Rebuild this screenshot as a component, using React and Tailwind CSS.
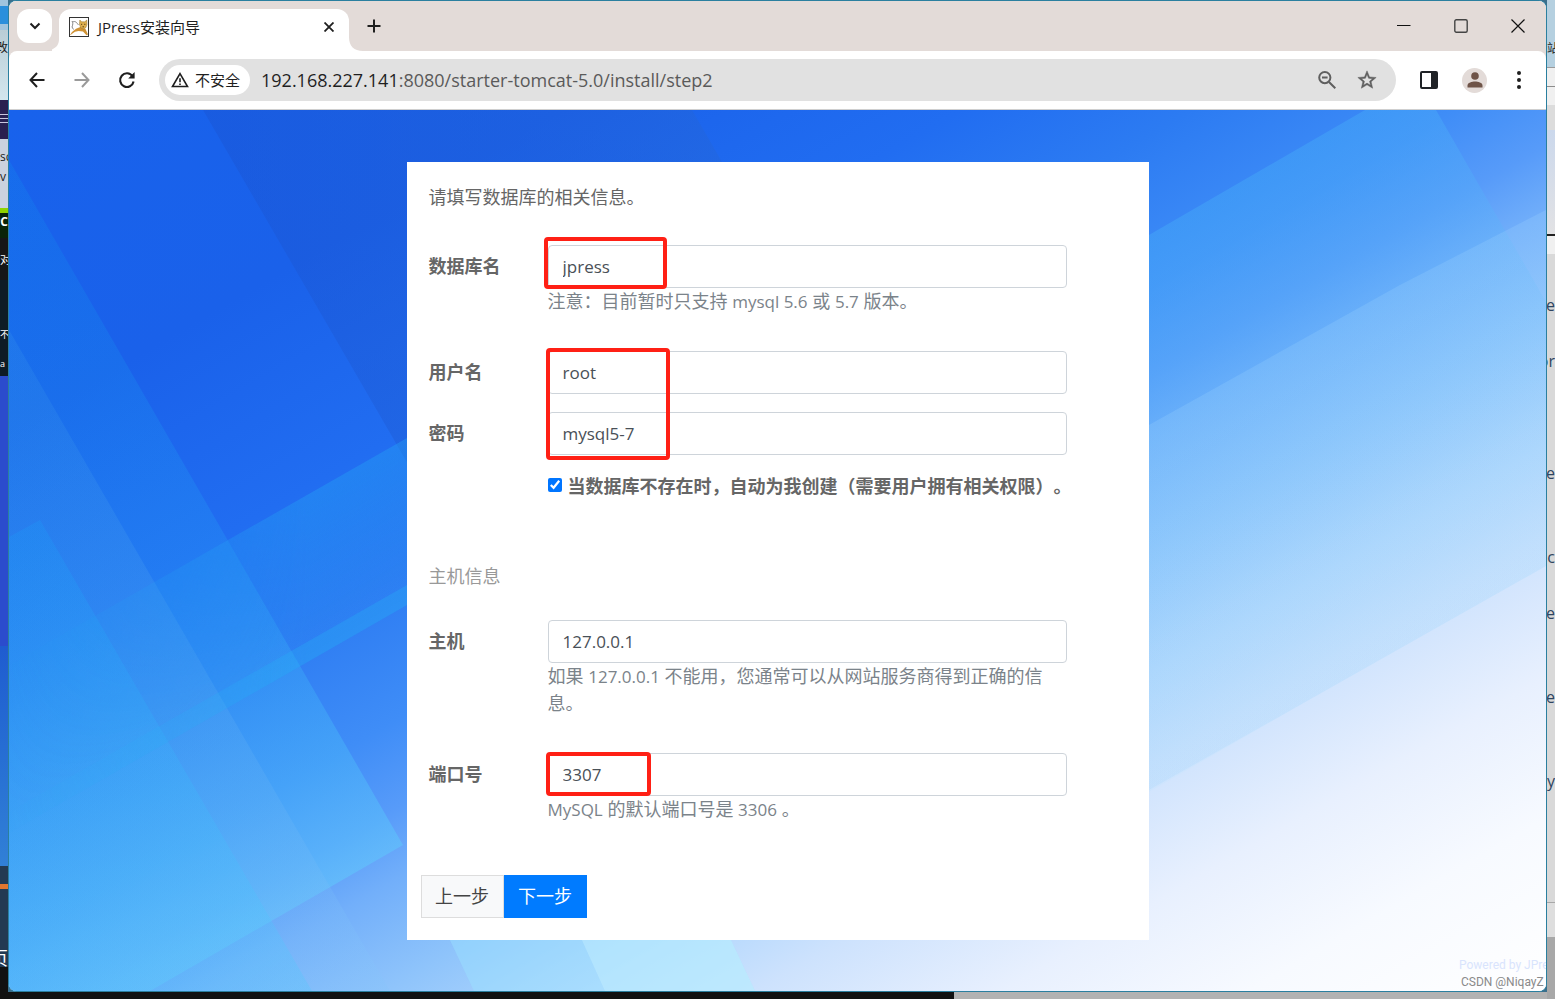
import React from "react";

const LEFT_NOTES = "text-[11px] leading-none text-white whitespace-nowrap";

const EDITOR_LINES = ["ne", "", "or", "", "", "", "te", "", "", ".c", "", "re", "", "", "ne", "", "", "ny"];

function LeftDesktop() {
  return (
    <aside aria-hidden="true" className="row-span-2 flex w-2 flex-col overflow-hidden bg-[#111111]">
      <div className="flex h-[30px] flex-col justify-center bg-[#9fc4de]">
        <div className="h-[18px] bg-[#2a8fdc]" />
      </div>
      <div className="flex h-[70px] flex-col items-end bg-gradient-to-b from-[#b9cdd6] to-[#d3e6ee] pt-3">
        <span className="text-[12px] leading-none text-[#222222]">改</span>
      </div>
      <div className="flex h-[39px] flex-col gap-[3px] bg-[#2a2050] pt-[14px]">
        <div className="h-px bg-[#c9c4dd]" />
        <div className="h-px bg-[#c9c4dd]" />
        <div className="h-px bg-[#c9c4dd]" />
      </div>
      <div className="flex h-[69px] flex-col gap-2 bg-[#cbd2de] pt-3">
        <span className="text-[12px] leading-none text-[#222222]">sc</span>
        <span className="text-[12px] leading-none text-[#222222]">v</span>
      </div>
      <div className="h-[5px] bg-[#8fd400]" />
      <div className="flex h-[25px] items-start justify-end bg-[#0a2408] pt-[3px]">
        <span className="text-[12px] font-bold leading-none text-white">PC</span>
      </div>
      <div className="flex h-[42px] items-center justify-start bg-[#161616]">
        <span className={LEFT_NOTES}>对</span>
      </div>
      <div className="flex h-24 flex-col items-start justify-end gap-5 bg-[#0e1c26] pb-2">
        <span className="text-[9px] leading-none text-white">不</span>
        <span className="text-[9px] leading-none text-white">a</span>
      </div>
      <div className="h-[270px] bg-[#2b4ccd]" />
      <div className="h-[220px] bg-gradient-to-b from-[#1f5cd0] to-[#3180d6]" />
      <div className="h-[18px] bg-[#233a52]" />
      <div className="h-[5px] bg-[#e0762e]" />
      <div className="flex h-[78px] items-end justify-end bg-[#233a52]">
        <span className="text-[18px] leading-none text-white">页</span>
      </div>
    </aside>
  );
}

function RightDesktop() {
  return (
    <aside aria-hidden="true" className="row-span-2 flex w-2 flex-col overflow-hidden bg-[#a8a8a8]">
      <div className="flex h-[67px] items-end bg-[#b5d0e0] pb-3">
        <span className="text-[12px] leading-none text-[#222222]">站</span>
      </div>
      <div className="flex h-[38px] flex-col justify-center border-t border-[#9a9a9a] bg-[#f0f0f0]">
        <div className="h-px bg-[#8c8c8c]" />
      </div>
      <div className="h-[25px] bg-[#dcdcdc]" />
      <div className="h-[106px] border-b-2 border-[#222222] bg-gradient-to-b from-[#cbd8ec] to-[#e2e2e4]" />
      <div className="h-[18px] bg-[#f0f0f0]" />
      <div className="flex h-[648px] flex-col bg-[#d9d9d9] pt-[37px]">
        {EDITOR_LINES.map((line, i) => (
          <div key={i} className="flex h-7 items-center justify-end text-[16px] leading-none text-[#2f4560]">
            {line}
          </div>
        ))}
      </div>
      <div className="h-9 border-y border-[#a8a8a8] bg-[#dedede]" />
    </aside>
  );
}

function Favicon() {
  return (
    <svg width="20" height="20" viewBox="0 0 20 20" className="shrink-0">
      <rect x="0.5" y="0.5" width="19" height="19" fill="#fff" stroke="#333" />
      <path d="M3 4c1.200 1.800 1 3.500 0 6M3.500 5c3-1.500 4.500 1 6 3M3 10l1.500 2.500" fill="none" stroke="#777" strokeWidth="0.9" />
      <path d="M1 18l2-3 4-3.200 5-2 4.500 2.200 2.500 5.500-1.500.8-3.500-3.800-4.500-.6-3.500.9-2.500 1.700-2 1.500z" fill="#cf9235" />
      <path d="M10.800 3l1.800 1.800h3.200L17.800 3l.2 4.500-1.200 3.200-2.600 1.400-2.500-1.400-1.200-3.200z" fill="#dfb050" stroke="#93702c" strokeWidth="0.5" />
      <path d="M12 7.300h1.200M15.200 7.300h1.200M13.500 9.800h1.500" stroke="#4a3510" strokeWidth="0.9" />
    </svg>
  );
}

function TabStrip() {
  return (
    <div className="flex h-[50px] items-end bg-[#e3dbd8] pl-2">
      <button type="button" aria-label="Search tabs" className="mb-2 flex h-[34px] w-[35px] items-center justify-center rounded-xl bg-white">
        <svg width="12" height="8" viewBox="0 0 12 8" fill="none" stroke="#1f1f1f" strokeWidth="2">
          <path d="M1.500 1.500L6 6l4.500-4.500" />
        </svg>
      </button>
      <svg width="7" height="42" viewBox="0 0 7 42" fill="#fff">
        <path d="M7 42V30C7 36 4 40 -5 42z" />
      </svg>
      <div className="flex h-[42px] w-[290px] items-center rounded-t-xl bg-white pb-[6px] pl-[10px] pr-3">
        <Favicon />
        <span className="ml-[9px] flex-1 text-[15px] leading-5 text-[#1f1f1f]">JPress安装向导</span>
        <button type="button" aria-label="Close tab" className="flex size-4 items-center justify-center">
          <svg width="10" height="10" viewBox="0 0 10 10" stroke="#1f1f1f" strokeWidth="1.800">
            <path d="M0.500 0.500l9 9M9.500 0.500l-9 9" />
          </svg>
        </button>
      </div>
      <svg width="14" height="14" viewBox="0 0 14 14" fill="#fff">
        <path d="M0 14V0C0 9 5 14 14 14z" />
      </svg>
      <button type="button" aria-label="New tab" className="mb-4 ml-[2px] flex size-[18px] items-center justify-center">
        <svg width="14" height="14" viewBox="0 0 14 14" stroke="#1f1f1f" strokeWidth="2">
          <path d="M7 0.500v13M0.500 7h13" />
        </svg>
      </button>
      <div className="flex-1" />
      <div className="mb-[17px] flex items-center gap-[41px] pr-5">
        <button type="button" aria-label="Minimize" className="flex size-4 items-center justify-center">
          <svg width="14" height="2" viewBox="0 0 14 2"><path d="M0 .5h13.500" stroke="#111" strokeWidth="1" /></svg>
        </button>
        <button type="button" aria-label="Maximize" className="flex size-4 items-center justify-center">
          <svg width="14" height="14" viewBox="0 0 14 14" fill="none" stroke="#444" strokeWidth="1.400">
            <rect x="0.800" y="0.800" width="12.400" height="12.400" rx="1.500" />
          </svg>
        </button>
        <button type="button" aria-label="Close window" className="flex size-4 items-center justify-center">
          <svg width="14" height="14" viewBox="0 0 14 14" stroke="#111" strokeWidth="1.200">
            <path d="M0.500 0.500l13 13M13.500 0.500l-13 13" />
          </svg>
        </button>
      </div>
    </div>
  );
}

function Toolbar() {
  return (
    <div className="bg-[#e3dbd8]">
      <div className="flex h-[59px] items-center rounded-t-lg border-b border-[#cfcfcf] bg-white pl-[18px] pr-[18px]">
        <div className="flex items-center gap-[25px]">
          <button type="button" aria-label="Back" className="flex size-5 items-center justify-center">
            <svg width="16" height="16" viewBox="0 0 16 16" fill="none" stroke="#1f1f1f" strokeWidth="2">
              <path d="M8 1L1.500 8 8 15M1.500 8H15.500" />
            </svg>
          </button>
          <button type="button" aria-label="Forward" className="flex size-5 items-center justify-center">
            <svg width="16" height="16" viewBox="0 0 16 16" fill="none" stroke="#9a9a9a" strokeWidth="2">
              <path d="M8 1l6.500 7L8 15M14.500 8H0.500" />
            </svg>
          </button>
          <button type="button" aria-label="Reload" className="flex size-5 items-center justify-center">
            <svg width="18" height="18" viewBox="0 0 18 18">
              <path d="M14.500 5.200A6.800 6.800 0 1 0 15.600 10.500" fill="none" stroke="#1f1f1f" strokeWidth="2.100" />
              <path d="M16.600 1v6.500H10.200z" fill="#1f1f1f" />
            </svg>
          </button>
        </div>
        <div className="ml-[22px] flex h-[42px] min-w-0 flex-1 items-center rounded-full bg-[#e1e1e1] pl-[6px] pr-[19px]">
          <button type="button" className="flex h-[30px] shrink-0 items-center gap-[6px] rounded-full bg-white pl-[6px] pr-[10px]">
            <svg width="18" height="16" viewBox="0 0 18 16" fill="none" stroke="#1f1f1f">
              <path d="M9 1.700L16.500 14.500h-15z" strokeWidth="1.600" />
              <path d="M9 6.200v4M9 11.500v1.500" strokeWidth="1.600" />
            </svg>
            <span className="text-[15px] leading-5 text-[#1f1f1f]">不安全</span>
          </button>
          <a href="#step2" className="ml-[11px] min-w-0 flex-1 truncate text-[18px] leading-6 text-[#5a5a5a]">
            <span className="text-[#1f1f1f]">192.168.227.141</span>:8080/starter-tomcat-5.0/install/step2
          </a>
          <button type="button" aria-label="Zoom" className="flex size-5 items-center justify-center">
            <svg width="18" height="18" viewBox="0 0 18 18" fill="none" stroke="#5f5f5f" strokeWidth="2">
              <circle cx="6.800" cy="6.600" r="5.600" />
              <path d="M11 11l6.300 6.300M4 6.600h5.600" />
            </svg>
          </button>
          <button type="button" aria-label="Bookmark" className="ml-5 flex size-5 items-center justify-center">
            <svg width="22" height="22" viewBox="0 0 24 24" fill="#5f5f5f" className="shrink-0">
              <path d="M22 9.240l-7.190-.62L12 2 9.190 8.630 2 9.240l5.460 4.730L5.820 21 12 17.270 18.180 21l-1.630-7.030L22 9.240zM12 15.400l-3.760 2.270 1-4.280-3.320-2.880 4.380-.38L12 6.100l1.710 4.040 4.380.38-3.320 2.880 1 4.280L12 15.400z" stroke="#5f5f5f" strokeWidth="0.500" />
            </svg>
          </button>
        </div>
        <button type="button" aria-label="Side panel" className="ml-6 flex size-[18px] items-center justify-center">
          <svg width="18" height="18" viewBox="0 0 18 18">
            <rect x="1" y="1" width="16" height="16" rx="1" fill="#fff" stroke="#1f2226" strokeWidth="2" />
            <path d="M11 1h6v16h-6z" fill="#1f2226" />
          </svg>
        </button>
        <button type="button" aria-label="Profile" className="ml-6 flex size-[25px] items-center justify-center rounded-full bg-[#e3dbd8]">
          <svg width="16" height="16" viewBox="0 0 16 16" fill="#6f5448">
            <circle cx="8" cy="4" r="3.800" />
            <path d="M.5 15.500v-2C.5 10.500 5 9.500 8 9.500s7.500 1 7.500 4v2z" />
          </svg>
        </button>
        <button type="button" aria-label="Menu" className="ml-[23px] flex h-5 w-[18px] items-center justify-center">
          <svg width="4" height="18" viewBox="0 0 4 18" fill="#1f1f1f">
            <circle cx="2" cy="2" r="2" />
            <circle cx="2" cy="9" r="2" />
            <circle cx="2" cy="16" r="2" />
          </svg>
        </button>
      </div>
    </div>
  );
}

function Backdrop() {
  return (
    <svg
      aria-hidden="true"
      className="absolute inset-0 size-full"
      viewBox="9 110 1537 881"
      preserveAspectRatio="none"
    >
      <defs>
        <linearGradient id="sky" gradientUnits="userSpaceOnUse" x1="9" y1="110" x2="776" y2="1440">
          <stop offset="0" stopColor="#1862ec" />
          <stop offset="0.18" stopColor="#1a61ea" />
          <stop offset="0.31" stopColor="#216df1" />
          <stop offset="0.385" stopColor="#2c7bf2" />
          <stop offset="0.47" stopColor="#3f8df7" />
          <stop offset="0.52" stopColor="#579bf9" />
          <stop offset="0.56" stopColor="#72affa" />
          <stop offset="0.62" stopColor="#8fc4fb" />
          <stop offset="0.69" stopColor="#b4d8fd" />
          <stop offset="0.74" stopColor="#cde2fd" />
          <stop offset="0.82" stopColor="#e8f0fe" />
          <stop offset="0.9" stopColor="#f7faff" />
          <stop offset="1" stopColor="#ffffff" />
        </linearGradient>
        <linearGradient id="shade" x1="0" y1="0" x2="1" y2="0">
          <stop offset="0" stopColor="#1a50cc" stopOpacity="0.35" />
          <stop offset="1" stopColor="#2a70dc" stopOpacity="0.45" />
        </linearGradient>
        <linearGradient id="beam" gradientUnits="userSpaceOnUse" x1="60" y1="250" x2="330" y2="890">
          <stop offset="0" stopColor="#10a0f0" stopOpacity="0.17" />
          <stop offset="0.5" stopColor="#28a4f6" stopOpacity="0.26" />
          <stop offset="1" stopColor="#60ccfc" stopOpacity="0.5" />
        </linearGradient>
        <linearGradient id="beamSoft" gradientUnits="userSpaceOnUse" x1="40" y1="400" x2="330" y2="991">
          <stop offset="0" stopColor="#3a98ea" stopOpacity="0.22" />
          <stop offset="1" stopColor="#84c4fa" stopOpacity="0.25" />
        </linearGradient>
        <linearGradient id="beamCyan" gradientUnits="userSpaceOnUse" x1="40" y1="540" x2="290" y2="940">
          <stop offset="0" stopColor="#18a4fa" stopOpacity="0.22" />
          <stop offset="1" stopColor="#50c8fc" stopOpacity="0.3" />
        </linearGradient>
        <linearGradient id="fadeLeft" x1="0" y1="0" x2="1" y2="0">
          <stop offset="0" stopColor="#fff" stopOpacity="0.1" />
          <stop offset="0.35" stopColor="#fff" stopOpacity="0.5" />
          <stop offset="0.75" stopColor="#fff" stopOpacity="1" />
        </linearGradient>
        <mask id="fadeMask" maskUnits="userSpaceOnUse" x="9" y="430" width="400" height="420">
          <rect x="9" y="430" width="400" height="420" fill="url(#fadeLeft)" />
        </mask>
        <linearGradient id="band" gradientUnits="userSpaceOnUse" x1="300" y1="500" x2="370" y2="620">
          <stop offset="0" stopColor="#25a0f4" stopOpacity="0.42" />
          <stop offset="1" stopColor="#25a0f4" stopOpacity="0.05" />
        </linearGradient>
        <linearGradient id="cyan" gradientUnits="userSpaceOnUse" x1="1200" y1="160" x2="1400" y2="506">
          <stop offset="0" stopColor="#40a8f8" stopOpacity="0.5" />
          <stop offset="1" stopColor="#70c0fa" stopOpacity="0.12" />
        </linearGradient>
        <linearGradient id="haze" gradientUnits="userSpaceOnUse" x1="1270" y1="350" x2="1420" y2="610">
          <stop offset="0" stopColor="#a8dcff" stopOpacity="0.2" />
          <stop offset="1" stopColor="#b4e2ff" stopOpacity="0.15" />
        </linearGradient>
      </defs>
      <path d="M9 110H1546V991H9z" fill="url(#sky)" />
      <path d="M203 110H692L980 609 580 761z" fill="url(#shade)" />
      <path d="M9 160L403 845 150 991H9z" fill="url(#beam)" />
      <path d="M9 330L390 991H9z" fill="url(#beamSoft)" />
      <path d="M9 537L40 520 312 991H9z" fill="url(#beamCyan)" />
      <g mask="url(#fadeMask)">
        <path d="M9 665L407 438V605L9 833z" fill="url(#band)" />
        <path d="M9 812L407 585V605L9 833z" fill="#26b0f6" fillOpacity="0.32" />
      </g>
      <path d="M1365 110H1436L1546 302V566L1300 705 1149 790V235z" fill="url(#cyan)" />
      <path d="M1149 425L1400 285 1546 210V566L1300 705 1149 792z" fill="url(#haze)" />
      <path d="M449 938L474 991H755L730 938z" fill="#9ce4ff" fillOpacity="0.42" />
      <path d="M581 938L605 991H755L730 938z" fill="#c8f2fe" fillOpacity="0.4" />
    </svg>
  );
}

function Field({ id, label, value, type = "text", children }) {
  return (
    <div className="flex items-start">
      <label htmlFor={id} className="w-[119px] shrink-0 pt-2 font-bold text-[#666666]">
        {label}
      </label>
      <div className="relative min-w-0 flex-1">
        <input
          id={id}
          type={type}
          defaultValue={value}
          className="block h-[43px] w-full rounded-[4px] border border-[#ced4da] bg-white px-[14px] text-[17px] text-[#495057] outline-none"
        />
        {children}
      </div>
    </div>
  );
}

function Help({ children }) {
  return <p className="text-[#7b838a]">{children}</p>;
}

function Latin({ children }) {
  return <span className="text-[17px]">{children}</span>;
}

const MARK = "pointer-events-none absolute rounded-[4px] border-4 border-[#ff2015]";

function InstallForm() {
  return (
    <form
      onSubmit={(e) => e.preventDefault()}
      className="relative mx-auto w-full max-w-[742px] bg-white p-[22px] text-[18px] leading-[27px] [text-spacing-trim:space-all]"
    >
      <p className="text-[#666666]">请填写数据库的相关信息。</p>
      <div className="pr-[60px] pt-[34px]">
        <Field id="dbName" label="数据库名" value="jpress">
          <Help>
            注意：目前暂时只支持 <Latin>mysql 5.6</Latin> 或 <Latin>5.7</Latin> 版本。
          </Help>
          <div className={`${MARK} -left-1 -top-2 h-[52px] w-[123px]`} />
        </Field>
        <div className="flex flex-col gap-[18px] pt-9">
          <Field id="dbUser" label="用户名" value="root">
            <div className={`${MARK} -left-[2px] -top-[3px] z-10 h-28 w-[124px]`} />
          </Field>
          <Field id="dbPassword" label="密码" value="mysql5-7" />
          <label className="ml-[119px] flex items-start gap-[6px] whitespace-nowrap font-bold text-[#666666]">
            <input type="checkbox" defaultChecked className="mt-[5px] size-[14px] shrink-0 accent-[#0075ff]" />
            当数据库不存在时，自动为我创建（需要用户拥有相关权限）。
          </label>
        </div>
        <h2 className="pt-[63px] text-[#999999]">主机信息</h2>
        <div className="flex flex-col gap-9 pt-[30px]">
          <Field id="dbHost" label="主机" value="127.0.0.1">
            <Help>
              如果 <Latin>127.0.0.1</Latin> 不能用，您通常可以从网站服务商得到正确的信息。
            </Help>
          </Field>
          <Field id="dbPort" label="端口号" value="3307">
            <Help>
              <Latin>MySQL</Latin> 的默认端口号是 <Latin>3306</Latin> 。
            </Help>
            <div className={`${MARK} -left-[2px] -top-px h-11 w-[105px]`} />
          </Field>
        </div>
      </div>
      <div className="-ml-2 flex pt-[52px]">
        <button type="button" className="h-[43px] w-[83px] border border-[#dddddd] bg-[#f8f9fa] text-[#444444]">
          上一步
        </button>
        <button type="submit" className="h-[43px] w-[83px] bg-[#007bff] text-white">
          下一步
        </button>
      </div>
    </form>
  );
}

export default function App() {
  return (
    <div className="grid min-h-screen grid-cols-[8px_minmax(0,1fr)_8px] grid-rows-[1fr_7px] bg-[#3a6f8c] font-['Open_Sans','Noto_Sans_CJK_SC',sans-serif]">
      <LeftDesktop />
      <div className="flex flex-col overflow-hidden rounded-lg border border-[#2a7f9f] bg-white">
        <TabStrip />
        <Toolbar />
        <main className="relative flex flex-1 flex-col overflow-hidden">
          <Backdrop />
          <div className="px-4 pb-[51px] pt-[52px]">
            <InstallForm />
          </div>
          <div className="absolute bottom-0 right-0 flex w-[87px] flex-col overflow-hidden whitespace-nowrap font-['Roboto',sans-serif] text-[12px] leading-[17px]">
            <span className="text-[#d9e4fd]">Powered by JPress</span>
            <span className="pl-[2px] text-[#8a8a8a]">CSDN @NiqayZ</span>
          </div>
        </main>
      </div>
      <RightDesktop />
      <div aria-hidden="true" className="col-start-2 row-start-2 flex">
        <div className="h-full w-[61.5%] bg-[#111111]" />
        <div className="h-full flex-1 bg-[#b2b2b2]" />
      </div>
    </div>
  );
}
